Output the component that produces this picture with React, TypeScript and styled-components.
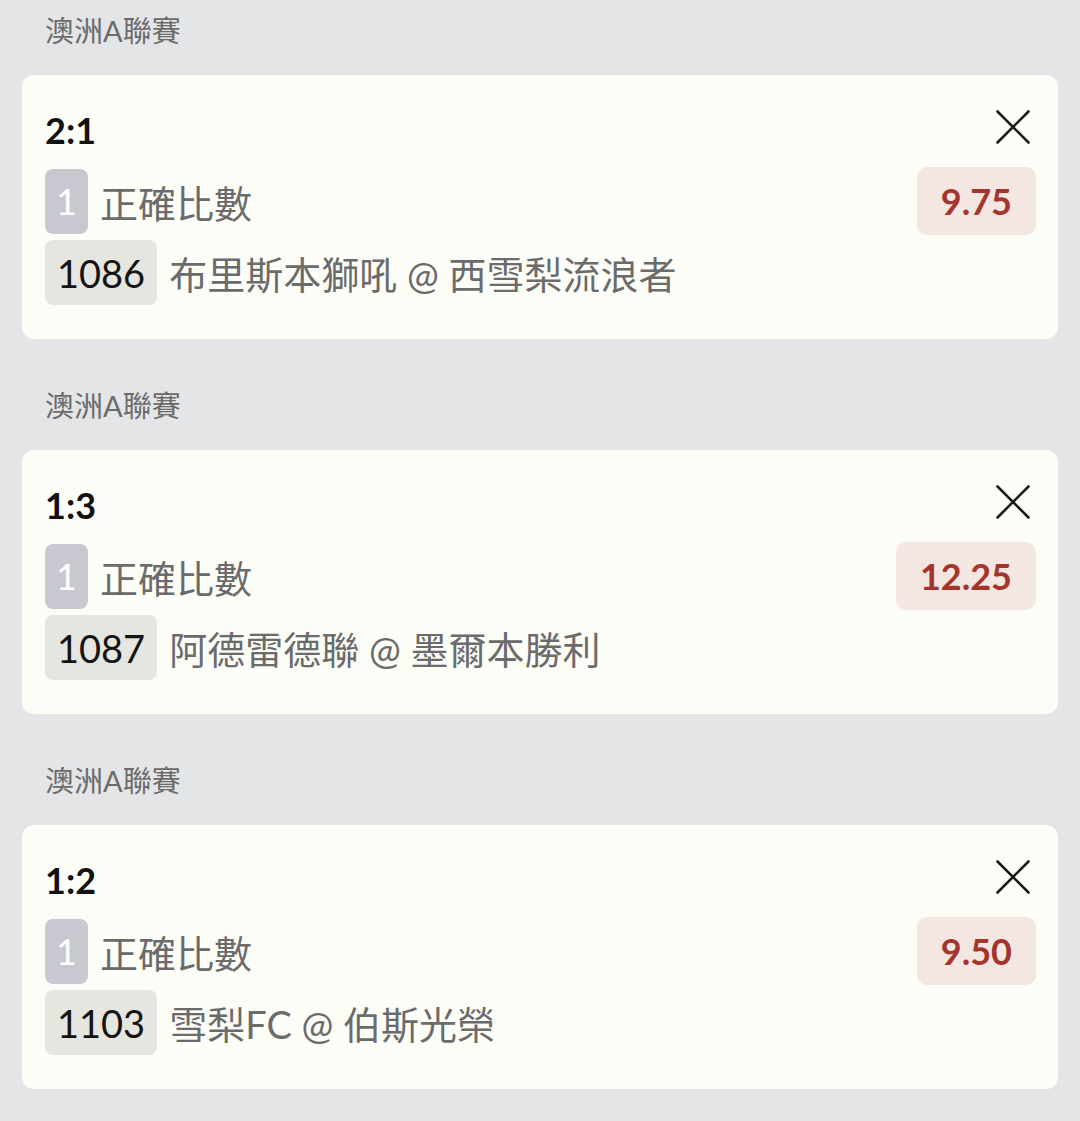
import React from "react";
import styled, { createGlobalStyle } from "styled-components";

const GlobalStyle = createGlobalStyle`
  html, body {
    margin: 0;
    padding: 0;
    background: #e4e5e7;
  }
  body {
    font-family: "Lato", "Noto Sans CJK TC", sans-serif;
  }
`;

type Bet = {
  league: string;
  score: string;
  seq: string;
  market: string;
  matchNo: string;
  teams: string;
  odds: string;
};

const bets: Bet[] = [
  {
    league: "澳洲A聯賽",
    score: "2:1",
    seq: "1",
    market: "正確比數",
    matchNo: "1086",
    teams: "布里斯本獅吼 @ 西雪梨流浪者",
    odds: "9.75",
  },
  {
    league: "澳洲A聯賽",
    score: "1:3",
    seq: "1",
    market: "正確比數",
    matchNo: "1087",
    teams: "阿德雷德聯 @ 墨爾本勝利",
    odds: "12.25",
  },
  {
    league: "澳洲A聯賽",
    score: "1:2",
    seq: "1",
    market: "正確比數",
    matchNo: "1103",
    teams: "雪梨FC @ 伯斯光榮",
    odds: "9.50",
  },
];

const Page = styled.div`
  min-height: 1121px;
  padding: 11px 22px 33px;
  box-sizing: border-box;
  display: flex;
  flex-direction: column;
  gap: 47px;
`;

const Section = styled.section`
  display: flex;
  flex-direction: column;
  gap: 24px;
`;

const League = styled.div`
  height: 40px;
  line-height: 40px;
  padding-left: 23px;
  font-size: 29px;
  color: #6b6b6b;
`;

const Card = styled.div`
  background: #fdfdf7;
  border-radius: 12px;
  padding: 22px 22px 34px 23px;
  display: flex;
  flex-direction: column;
`;

const Header = styled.div`
  height: 60px;
  display: flex;
  align-items: center;
  justify-content: space-between;
`;

const Score = styled.div`
  font-size: 36px;
  font-weight: 700;
  line-height: 1;
  color: #111;
  padding-top: 5px;
`;

const CloseButton = styled.button`
  border: none;
  background: none;
  padding: 0;
  margin-right: 6px;
  width: 34px;
  height: 34px;
  display: flex;
  cursor: pointer;
`;

const Row = styled.div<{ $top: number }>`
  display: flex;
  align-items: center;
  gap: 12px;
  margin-top: ${(p) => p.$top}px;
  min-height: 65px;
`;

const Tag = styled.span<{ $seq?: boolean }>`
  height: 65px;
  display: inline-flex;
  align-items: center;
  justify-content: center;
  box-sizing: border-box;
  padding: 0 ${(p) => (p.$seq ? 11 : 12)}px;
  border-radius: 8px;
  font-size: ${(p) => (p.$seq ? 36 : 38)}px;
  background: ${(p) => (p.$seq ? "#c8c8d0" : "#e6e6e0")};
  color: ${(p) => (p.$seq ? "#ffffff" : "#141414")};
`;

const Text = styled.span`
  font-size: 38px;
  color: #6b6b6b;
  white-space: nowrap;
`;

const Odds = styled.span`
  margin-left: auto;
  height: 68px;
  display: inline-flex;
  align-items: center;
  padding: 0 24px;
  border-radius: 10px;
  background: #f4e6e1;
  color: #a5342c;
  font-size: 36px;
  font-weight: 700;
`;

const CloseIcon = () => (
  <svg width="34" height="34" viewBox="0 0 34 34">
    <path
      d="M1.5 1.5 L32.5 32.5 M32.5 1.5 L1.5 32.5"
      stroke="#1a1a1a"
      strokeWidth="2.6"
      strokeLinecap="round"
    />
  </svg>
);

const BetCard: React.FC<{ bet: Bet }> = ({ bet }) => (
  <Section>
    <League>{bet.league}</League>
    <Card>
      <Header>
        <Score>{bet.score}</Score>
        <CloseButton aria-label="remove">
          <CloseIcon />
        </CloseButton>
      </Header>
      <Row $top={10}>
        <Tag $seq>{bet.seq}</Tag>
        <Text>{bet.market}</Text>
        <Odds>{bet.odds}</Odds>
      </Row>
      <Row $top={5}>
        <Tag>{bet.matchNo}</Tag>
        <Text>{bet.teams}</Text>
      </Row>
    </Card>
  </Section>
);

const App: React.FC = () => {
  return (
    <>
      <GlobalStyle />
      <Page>
        {bets.map((bet, i) => (
          <BetCard key={i} bet={bet} />
        ))}
      </Page>
    </>
  );
};

export default App;
